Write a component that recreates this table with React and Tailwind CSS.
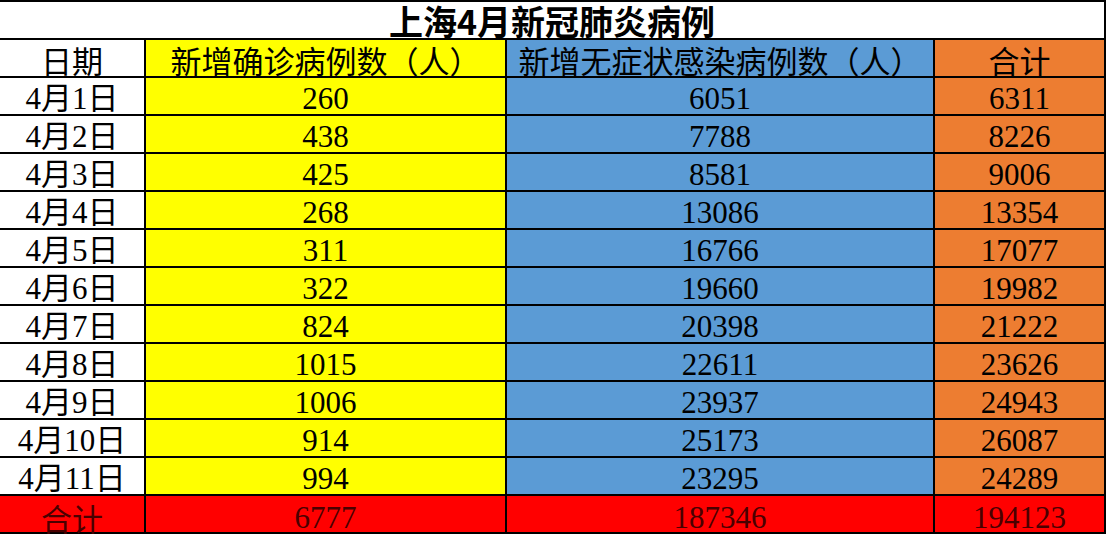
import React from "react";

const rows = [
  ["4月1日", "260", "6051", "6311"],
  ["4月2日", "438", "7788", "8226"],
  ["4月3日", "425", "8581", "9006"],
  ["4月4日", "268", "13086", "13354"],
  ["4月5日", "311", "16766", "17077"],
  ["4月6日", "322", "19660", "19982"],
  ["4月7日", "824", "20398", "21222"],
  ["4月8日", "1015", "22611", "23626"],
  ["4月9日", "1006", "23937", "24943"],
  ["4月10日", "914", "25173", "26087"],
  ["4月11日", "994", "23295", "24289"],
];

const num = "flex items-center justify-center pt-[4px] text-[31px] leading-none text-black [font-family:'Liberation_Serif','Noto_Sans_CJK_SC',serif]";
const head = "flex items-center justify-center pt-[2px] text-[31px] leading-none text-black [font-family:'Noto_Sans_CJK_SC',sans-serif]";
const tot = "flex items-center justify-center pt-[6px] text-[31px] leading-none text-[#4a0000] bg-[#ff0000] [font-family:'Liberation_Serif','Noto_Sans_CJK_SC',serif]";

export default function App() {
  return (
    <div className="w-[1106px] h-[534px] bg-black overflow-hidden">
      <div className="grid grid-cols-[144px_359px_426px_169px] auto-rows-[36px] gap-[2px] pt-[2px] pr-[2px] pb-[2px]">
        <div className="col-span-4 bg-white flex items-center justify-center overflow-hidden">
          <span className="text-[34px] font-bold leading-none text-black pt-[1px] [font-family:'Noto_Sans_CJK_SC',sans-serif]">
            上海4月新冠肺炎病例
          </span>
        </div>
        <div className={`${head} bg-white`}>日期</div>
        <div className={`${head} bg-[#ffff00]`}>新增确诊病例数（人）</div>
        <div className={`${head} bg-[#5b9bd5]`}>新增无症状感染病例数（人）</div>
        <div className={`${head} bg-[#ed7d31]`}>合计</div>
        {rows.map((r) => (
          <React.Fragment key={r[0]}>
            <div className={`${num} bg-white`}>{r[0]}</div>
            <div className={`${num} bg-[#ffff00]`}>{r[1]}</div>
            <div className={`${num} bg-[#5b9bd5]`}>{r[2]}</div>
            <div className={`${num} bg-[#ed7d31]`}>{r[3]}</div>
          </React.Fragment>
        ))}
        <div className={`${tot} [font-family:'Noto_Sans_CJK_SC',sans-serif]`}>合计</div>
        <div className={tot}>6777</div>
        <div className={tot}>187346</div>
        <div className={tot}>194123</div>
      </div>
    </div>
  );
}
